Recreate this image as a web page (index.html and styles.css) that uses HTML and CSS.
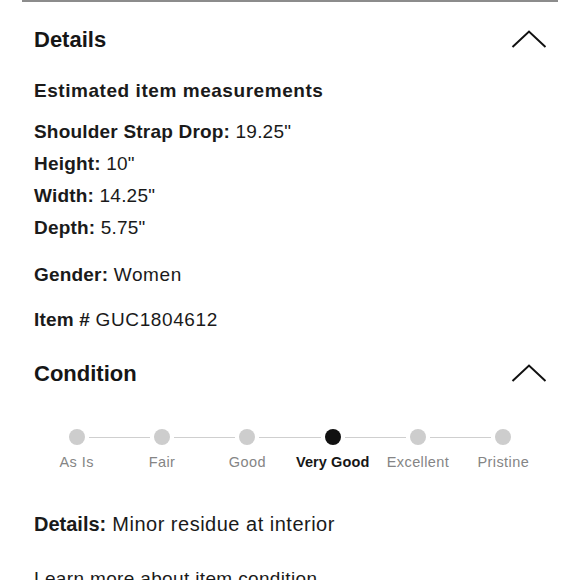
FILE: index.html
```html
<!DOCTYPE html>
<html lang="en">
<head>
<meta charset="utf-8">
<title>Details</title>
<link rel="stylesheet" href="styles.css">
</head>
<body>
<div class="rule"></div>

<section class="section">
  <div class="section-head">
    <h2 class="section-title">Details</h2>
    <svg class="chevron" width="36" height="20" viewBox="0 0 36 20" aria-hidden="true"><path d="M1.5 17 L18 1.5 L34.5 17" fill="none" stroke="#111" stroke-width="2"/></svg>
  </div>
  <h3 class="subhead">Estimated item measurements</h3>
  <ul class="measures">
    <li><b>Shoulder Strap Drop:</b> 19.25"</li>
    <li><b>Height:</b> 10"</li>
    <li><b>Width:</b> 14.25"</li>
    <li><b>Depth:</b> 5.75"</li>
  </ul>
  <p class="line line-gender"><b>Gender:</b> <span class="val">Women</span></p>
  <p class="line line-item"><b>Item #</b> <span class="val">GUC1804612</span></p>
</section>

<section class="section">
  <div class="section-head">
    <h2 class="section-title">Condition</h2>
    <svg class="chevron" width="36" height="20" viewBox="0 0 36 20" aria-hidden="true"><path d="M1.5 17 L18 1.5 L34.5 17" fill="none" stroke="#111" stroke-width="2"/></svg>
  </div>
  <ol class="stepper">
    <li class="step"><span class="dot"></span><span class="label">As Is</span></li>
    <li class="step"><span class="dot"></span><span class="label">Fair</span></li>
    <li class="step"><span class="dot"></span><span class="label">Good</span></li>
    <li class="step step-active"><span class="dot"></span><span class="label">Very Good</span></li>
    <li class="step"><span class="dot"></span><span class="label">Excellent</span></li>
    <li class="step step-last"><span class="dot"></span><span class="label">Pristine</span></li>
  </ol>
  <p class="line line-details"><b>Details:</b> Minor residue at interior</p>
  <p class="line line-learn">Learn more about item condition</p>
</section>
</body>
</html>
```

FILE: styles.css
```css
* { box-sizing: border-box; }

html, body {
  margin: 0;
  padding: 0;
  background: #fff;
}

body {
  font-family: "Liberation Sans", Arial, sans-serif;
  color: #1a1a1a;
  width: 580px;
  overflow: hidden;
}

.rule {
  height: 2px;
  margin: 0 22px;
  background: #8c8c8c;
}

.section {
  padding: 0 34px;
}

.section-head {
  display: flex;
  align-items: center;
  justify-content: space-between;
  height: 76px;
}

.section-title {
  margin: 0;
  font-size: 22px;
  font-weight: 700;
  letter-spacing: 0;
  color: #161616;
}

.chevron {
  display: block;
  margin-right: -1px;
}

.subhead {
  margin: -1px 0 0;
  font-size: 19px;
  line-height: 28px;
  font-weight: 700;
  letter-spacing: 0.55px;
}

.measures {
  list-style: none;
  margin: 11px 0 0;
  padding: 0;
}

.measures li,
.line {
  font-size: 19px;
  line-height: 32px;
  letter-spacing: 0.2px;
}

.line {
  margin: 0;
}

b { font-weight: 700; }

.val { letter-spacing: 0.6px; }

.line-gender { margin-top: 15px; }
.line-item { margin-top: 13px; }

.stepper {
  list-style: none;
  margin: 0;
  padding: 17px 0 0;
  display: grid;
  grid-template-columns: repeat(6, 1fr);
}

.step {
  position: relative;
  display: flex;
  flex-direction: column;
  align-items: center;
}

.step::after {
  content: "";
  position: absolute;
  top: 7.5px;
  left: calc(50% + 12px);
  width: calc(100% - 24px);
  height: 1px;
  background: #cfcfcf;
}

.step-last::after { display: none; }

.dot {
  width: 16px;
  height: 16px;
  border-radius: 50%;
  background: #cdcdcd;
}

.label {
  margin-top: 7px;
  font-size: 14.5px;
  line-height: 20px;
  color: #858585;
  letter-spacing: 0.4px;
  white-space: nowrap;
}

.step-active .dot { background: #111; }
.step-active .label {
  color: #161616;
  font-weight: 700;
  letter-spacing: 0.1px;
}

.line-details {
  margin-top: 36px;
  font-size: 20px;
  letter-spacing: 0.5px;
}
.line-details b { letter-spacing: 0; }

.line-learn {
  margin-top: 23px;
  font-size: 19px;
  letter-spacing: 0.35px;
}
```
